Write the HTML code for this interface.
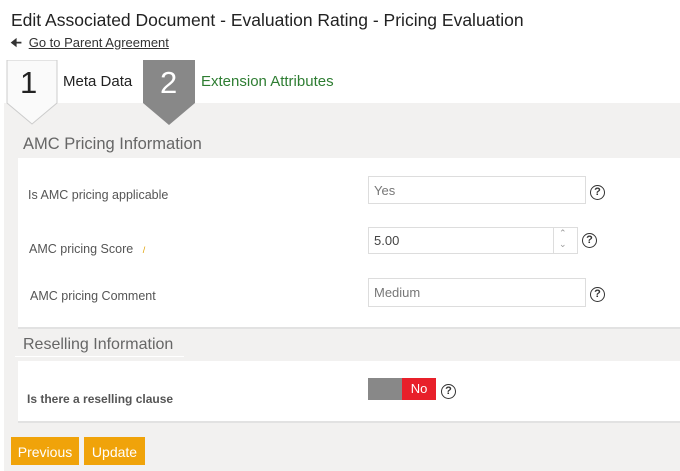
<!DOCTYPE html>
<html><head><style>
*{margin:0;padding:0;box-sizing:border-box}
body{width:680px;height:471px;background:#fff;font-family:"Liberation Sans",sans-serif;position:relative;overflow:hidden;color:#333}
.a{position:absolute}
.q{position:absolute;width:15px;height:15px;border:1.3px solid #333;border-radius:50%;font-size:11px;font-weight:bold;text-align:center;line-height:13px;color:#333}
.inp{position:absolute;border:1px solid #ddd;background:#fff;font-size:13px;color:#777;padding-left:5px;line-height:28px}
.lbl{position:absolute;font-size:12.5px;color:#555}
</style></head><body>
<div class="a" style="left:11px;top:10px;font-size:17.5px;color:#222">Edit Associated Document - Evaluation Rating - Pricing Evaluation</div>
<div class="a" style="left:10px;top:34px;font-size:13px;color:#333">&#129032; <span style="text-decoration:underline;margin-left:3px">Go to Parent Agreement</span></div>

<div class="a" style="left:4px;top:103px;width:676px;height:368px;background:#f2f1f0"></div>
<svg class="a" style="left:6px;top:60px" width="52" height="66"><polygon points="1,0 51,0 51,43 26,64 1,43" fill="#fafafa" stroke="#ccc"/></svg>
<div class="a" style="left:20px;top:65px;font-size:31px;color:#222">1</div>
<div class="a" style="left:63px;top:73px;font-size:15px;color:#222">Meta Data</div>
<svg class="a" style="left:143px;top:60px" width="52" height="66"><polygon points="0,0 52,0 52,43 26,65 0,43" fill="#888"/></svg>
<div class="a" style="left:160px;top:65px;font-size:31px;color:#fff">2</div>
<div class="a" style="left:201px;top:73px;font-size:15px;color:#2e7d32">Extension Attributes</div>

<div class="a" style="left:23px;top:135px;font-size:16.5px;color:#666">AMC Pricing Information</div>
<div class="a" style="left:18px;top:158px;width:662px;height:171px;background:#fff;border-bottom:2px solid #e2e2e2"></div>
<div class="lbl" style="left:28px;top:188px">Is AMC pricing applicable</div>
<div class="inp" style="left:368px;top:176px;width:218px;height:28px">Yes</div>
<div class="q" style="left:590px;top:185px">?</div>
<div class="lbl" style="left:29px;top:242px">AMC pricing Score <span style="color:#e0a000;font-size:9px;margin-left:6px">/</span></div>
<div class="inp" style="left:368px;top:227px;width:210px;height:27px;line-height:26px;color:#444">5.00</div>
<div class="a" style="left:553px;top:228px;width:1px;height:25px;background:#ddd"></div>
<div class="a" style="left:559px;top:228px;font-size:9px;color:#999;line-height:11px">&#8963;<br>&#8964;</div>
<div class="q" style="left:582px;top:233px">?</div>
<div class="lbl" style="left:30px;top:289px">AMC pricing Comment</div>
<div class="inp" style="left:368px;top:278px;width:218px;height:29px">Medium</div>
<div class="q" style="left:590px;top:287px">?</div>

<div class="a" style="left:23px;top:336px;font-size:16px;color:#666">Reselling Information</div>
<div class="a" style="left:15px;top:356px;width:169px;height:1px;background:#fff"></div>
<div class="a" style="left:18px;top:361px;width:662px;height:62px;background:#fff;border-bottom:2px solid #e2e2e2"></div>
<div class="lbl" style="left:27px;top:392px;font-weight:bold;font-size:12px;color:#555">Is there a reselling clause</div>
<div class="a" style="left:368px;top:378px;width:34px;height:22px;background:#888"></div>
<div class="a" style="left:402px;top:378px;width:34px;height:22px;background:#e8202a;color:#fff;font-size:13px;text-align:center;line-height:22px">No</div>
<div class="q" style="left:441px;top:384px">?</div>

<div class="a" style="left:11px;top:437px;width:68px;height:28px;background:#f0a30a;color:#fff;font-size:14px;text-align:center;line-height:30px">Previous</div>
<div class="a" style="left:84px;top:437px;width:61px;height:28px;background:#f0a30a;color:#fff;font-size:14px;text-align:center;line-height:30px">Update</div>
</body></html>
